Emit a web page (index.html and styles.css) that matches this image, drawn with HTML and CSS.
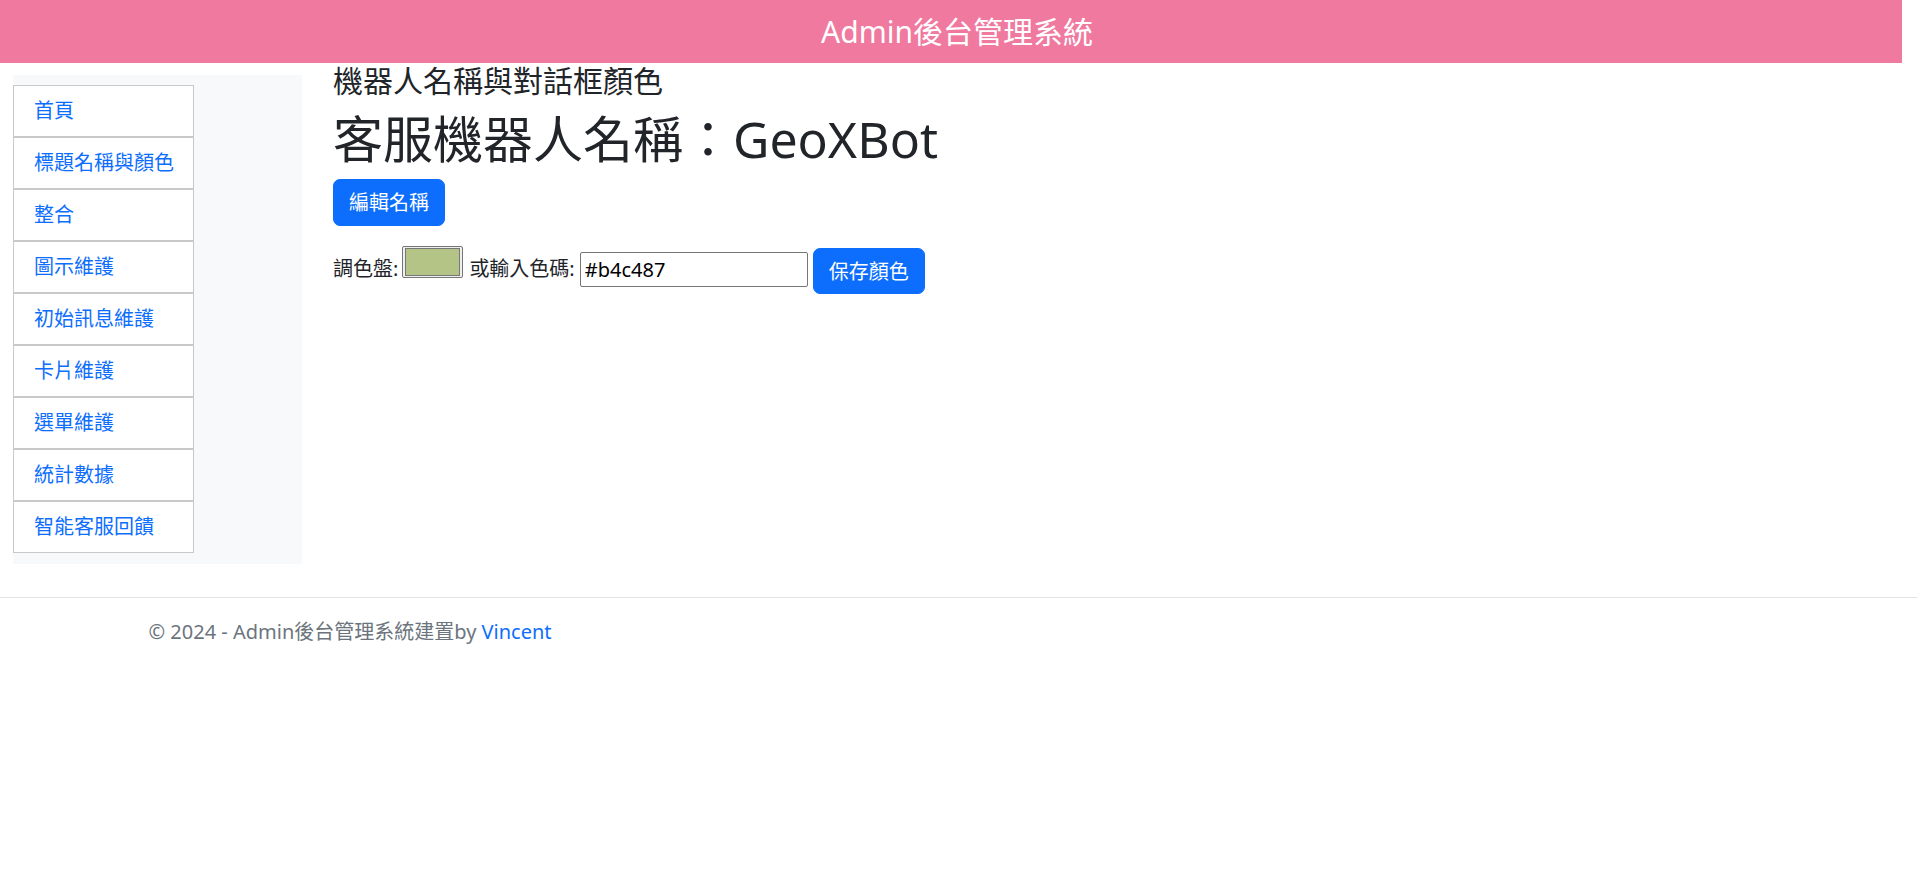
FILE: index.html
```html
<!DOCTYPE html>
<html lang="zh-Hant">
<head>
<meta charset="utf-8">
<title>Admin後台管理系統</title>
<link rel="stylesheet" href="styles.css">
</head>
<body>
<header class="topbar">
  <span class="topbar-title">Admin後台管理系統</span>
</header>
<div class="layout">
  <aside class="sidebar">
    <ul class="nav-list">
      <li class="nav-item"><a href="#">首頁</a></li>
      <li class="nav-item"><a href="#">標題名稱與顏色</a></li>
      <li class="nav-item"><a href="#">整合</a></li>
      <li class="nav-item"><a href="#">圖示維護</a></li>
      <li class="nav-item"><a href="#">初始訊息維護</a></li>
      <li class="nav-item"><a href="#">卡片維護</a></li>
      <li class="nav-item"><a href="#">選單維護</a></li>
      <li class="nav-item"><a href="#">統計數據</a></li>
      <li class="nav-item"><a href="#">智能客服回饋</a></li>
    </ul>
  </aside>
  <main class="content">
    <h4 class="section-title">機器人名稱與對話框顏色</h4>
    <h1 class="bot-name">客服機器人名稱：GeoXBot</h1>
    <button class="btn">編輯名稱</button>
    <div class="color-row">
      <label class="row-label">調色盤:</label>
      <input class="color-pick" type="color" value="#b4c487">
      <label class="row-label">或輸入色碼:</label>
      <input class="color-text" type="text" value="#b4c487">
      <button class="btn btn-save">保存顏色</button>
    </div>
  </main>
</div>
<footer class="footer">
  <div class="footer-inner">© 2024 - Admin後台管理系統建置by <a href="#">Vincent</a></div>
</footer>
</body>
</html>
```

FILE: styles.css
```css
* { box-sizing: border-box; }

html, body {
  margin: 0;
  padding: 0;
  background: #ffffff;
}

body {
  font-family: "Noto Sans", "Noto Sans CJK TC", sans-serif;
  font-size: 20px;
  line-height: 1.5;
  color: #212529;
}

a { color: #0d6efd; text-decoration: none; }

.topbar {
  height: 63px;
  margin-right: 15px;
  background: #f0799f;
  display: flex;
  align-items: center;
  justify-content: center;
  padding-left: 12px;
}

.topbar-title {
  color: #ffffff;
  font-size: 30px;
  line-height: 1;
}

.layout {
  display: flex;
  align-items: flex-start;
  padding-left: 13px;
}

.sidebar {
  width: 289px;
  margin-top: 12px;
  background: #f8f9fa;
  padding: 10px 0 11px 0;
}

.nav-list {
  list-style: none;
  margin: 0;
  padding: 0;
  width: 181px;
}

.nav-item {
  border: 1px solid #c9c9c9;
  background: #ffffff;
  padding: 10px 20px;
  line-height: 30px;
  white-space: nowrap;
}

.content {
  margin-left: 31px;
}

.section-title {
  margin: 0 0 10px 0;
  font-size: 30px;
  font-weight: 400;
  line-height: 1.2;
}

.bot-name {
  margin: 0 0 10px 0;
  font-size: 50px;
  font-weight: 400;
  line-height: 1.2;
}

.btn {
  display: inline-block;
  font-family: inherit;
  font-size: 20px;
  line-height: 30px;
  color: #ffffff;
  background: #0d6efd;
  border: 1px solid #0d6efd;
  border-radius: 7px;
  padding: 7.5px 15px;
  width: 112px;
  height: 47px;
  cursor: pointer;
}

.color-row {
  display: flex;
  align-items: flex-start;
  margin-top: 20px;
}

.row-label {
  margin-top: 8px;
  line-height: 30px;
  margin-right: 4px;
}

.color-pick {
  width: 61px;
  height: 32px;
  padding: 0;
  margin: 0 6px 0 0;
  border: 1px solid #767676;
  border-radius: 2px;
  background: #efefef;
}

.color-pick::-webkit-color-swatch-wrapper {
  padding: 1px 2px;
}

.color-pick::-webkit-color-swatch {
  border: 1px solid #777777;
  border-radius: 0;
}

.color-text {
  margin: 6px 5px 0 1px;
  width: 228px;
  height: 35px;
  border: 1px solid #767676;
  border-radius: 2px;
  padding: 1px 4px;
  font-family: "Noto Sans", sans-serif;
  font-size: 20px;
  color: #000000;
}

.btn-save {
  margin-top: 2px;
  height: 46px;
}

.footer {
  margin-top: 33px;
  border-top: 1px solid #e3e3e3;
}

.footer-inner {
  max-width: 1650px;
  margin: 0 auto;
  padding: 19px 15px 0 15px;
  color: #6c757d;
  line-height: 30px;
}
```
